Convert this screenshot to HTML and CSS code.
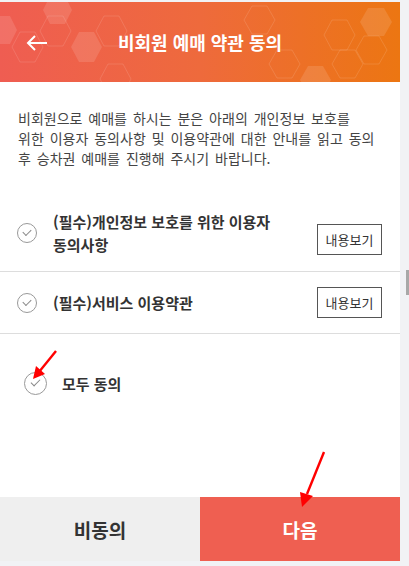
FILE: index.html
```html
<!DOCTYPE html>
<html lang="ko">
<head>
  <meta charset="UTF-8">
  <meta name="viewport" content="width=device-width, initial-scale=1.0">
  <title>비회원 예매 약관 동의</title>
  <link rel="stylesheet" href="styles.css">
</head>
<body>
  <div class="page">
    <!-- 상단 헤더 -->
    <div class="header">
      <svg class="hex-bg" width="400" height="80" viewBox="0 0 400 80">
        <g fill="#fff" fill-opacity="0.12">
          <polygon points="0,14 10,14 17,28 10,42 0,42"/>
          <polygon points="79,30 94,30 102,45 94,60 79,60 71,45"/>
          <polygon points="50,-6 65,-6 72,8 65,22 50,22 43,8"/>
          <polygon points="368,6 384,6 392,20 384,34 368,34 360,20"/>
          <polygon points="308,64 323,64 331,78 323,92 308,92 300,78"/>
        </g>
        <g fill="none" stroke="#fff" stroke-opacity="0.12" stroke-width="1">
          <polygon points="20,30 35,30 43,45 35,60 20,60 12,45"/>
          <polygon points="48,14 63,14 71,29 63,44 48,44 40,29"/>
          <polygon points="104,14 119,14 127,29 119,44 104,44 96,29"/>
          <polygon points="108,62 123,62 131,77 123,92 108,92 100,77"/>
          <polygon points="252,4 267,4 275,18 267,32 252,32 244,18"/>
          <polygon points="277,48 292,48 300,62 292,76 277,76 269,62"/>
          <polygon points="332,18 347,18 355,33 347,48 332,48 324,33"/>
          <polygon points="340,48 355,48 363,62 355,76 340,76 332,62"/>
          <polygon points="364,34 379,34 387,48 379,62 364,62 356,48"/>
        </g>
      </svg>
      <span class="back">
        <svg width="22" height="16" viewBox="0 0 22 16">
          <path d="M21 8H2M9 1L2 8l7 7" fill="none" stroke="#fff" stroke-width="2"/>
        </svg>
      </span>
      <h1 class="title">비회원 예매 약관 동의</h1>
    </div>

    <p class="intro">비회원으로 예매를 하시는 분은 아래의 개인정보 보호를 위한 이용자 동의사항 및 이용약관에 대한 안내를 읽고 동의 후 승차권 예매를 진행해 주시기 바랍니다.</p>

    <!-- 약관 목록 -->
    <div class="terms">
      <div class="term-row">
        <span class="check"></span>
        <span class="term-title">(필수)개인정보 보호를 위한 이용자<br>동의사항</span>
        <button class="view-btn first">내용보기</button>
      </div>
      <div class="term-row">
        <span class="check"></span>
        <span class="term-title">(필수)서비스 이용약관</span>
        <button class="view-btn">내용보기</button>
      </div>
    </div>

    <div class="agree-all">
      <span class="check big"></span>
      <span class="agree-label">모두 동의</span>
    </div>

    <div class="footer">
      <button class="btn-disagree">비동의</button>
      <button class="btn-next">다음</button>
    </div>

    <!-- 표시용 화살표 -->
    <svg class="marker marker-1" width="30" height="32" viewBox="0 0 30 32">
      <path d="M26 2L9 23" stroke="#f00" stroke-width="2.4" fill="none"/>
      <polygon points="3,30 6,17 15,25" fill="#f00"/>
    </svg>
    <svg class="marker marker-2" width="30" height="60" viewBox="0 0 30 60">
      <path d="M26 2L9 44" stroke="#f00" stroke-width="2.4" fill="none"/>
      <polygon points="4,57 2,42 15,46" fill="#f00"/>
    </svg>
  </div>

  <div class="scroll-track">
    <div class="scroll-thumb"></div>
  </div>
</body>
</html>
```

FILE: styles.css
```css
body {
  margin: 0;
  padding: 0;
  background-color: #f1f2f5;
  font-family: "Noto Sans CJK KR", "Noto Sans", sans-serif;
  display: flex;
}
.page {
  position: relative;
  width: 400px;
  height: 559px;
  margin-top: 2px;
  background-color: #fff;
  display: flex;
  flex-direction: column;
}
.header {
  position: relative;
  height: 80px;
  background: linear-gradient(90deg, #ef5d52 0%, #ee6a3c 50%, #ec7612 100%);
  display: flex;
  align-items: center;
  justify-content: center;
  overflow: hidden;
}
.hex-bg {
  position: absolute;
  left: 0;
  top: 0;
}
.back {
  position: absolute;
  left: 26px;
  top: 33px;
  line-height: 0;
}
.title {
  position: relative;
  margin: 0;
  color: #fff;
  font-size: 18px;
  font-weight: bold;
}
.intro {
  margin: 26px 0 27px;
  padding: 0 24px 0 18px;
  font-size: 14px;
  line-height: 20px;
  word-spacing: 2px;
  word-break: keep-all;
  color: #444;
}
.term-row {
  display: flex;
  align-items: center;
  padding: 15px 18px 15px 17px;
  border-bottom: 1px solid #ddd;
}
.check {
  flex: none;
  width: 20px;
  height: 20px;
  border: 1px solid #999;
  border-radius: 50%;
  position: relative;
  box-sizing: border-box;
}
.check::after {
  content: "";
  position: absolute;
  left: 5px;
  top: 5px;
  width: 7px;
  height: 4px;
  border-left: 1px solid #888;
  border-bottom: 1px solid #888;
  transform: rotate(-45deg);
}
.check.big {
  width: 23px;
  height: 23px;
}
.check.big::after {
  left: 6px;
  top: 6px;
  width: 8px;
  height: 4px;
}
.term-title {
  flex: 1;
  margin-left: 16px;
  font-size: 15px;
  font-weight: bold;
  line-height: 23px;
  color: #333;
}
.view-btn {
  flex: none;
  width: 65px;
  height: 31px;
  padding: 0;
  background: #fff;
  border: 1px solid #555;
  font-family: inherit;
  font-size: 13px;
  color: #333;
}
.view-btn.first {
  margin-top: 12px;
}
.agree-all {
  display: flex;
  align-items: center;
  padding: 38px 0 0 24px;
}
.agree-label {
  margin-left: 15px;
  font-size: 15px;
  font-weight: bold;
  color: #333;
}
.footer {
  margin-top: auto;
  display: flex;
  height: 64px;
}
.footer button {
  flex: 1;
  border: none;
  font-family: inherit;
  font-size: 19px;
  font-weight: bold;
}
.btn-disagree {
  background-color: #efefef;
  color: #333;
}
.btn-next {
  background-color: #ef5f51;
  color: #fff;
}
.marker {
  position: absolute;
}
.marker-1 {
  left: 30px;
  top: 347px;
}
.marker-2 {
  left: 298px;
  top: 448px;
}
.scroll-track {
  flex: none;
  width: 9px;
  display: flex;
  justify-content: flex-end;
}
.scroll-thumb {
  width: 3px;
  height: 25px;
  margin-top: 270px;
  background-color: #a8a8a8;
}
```
